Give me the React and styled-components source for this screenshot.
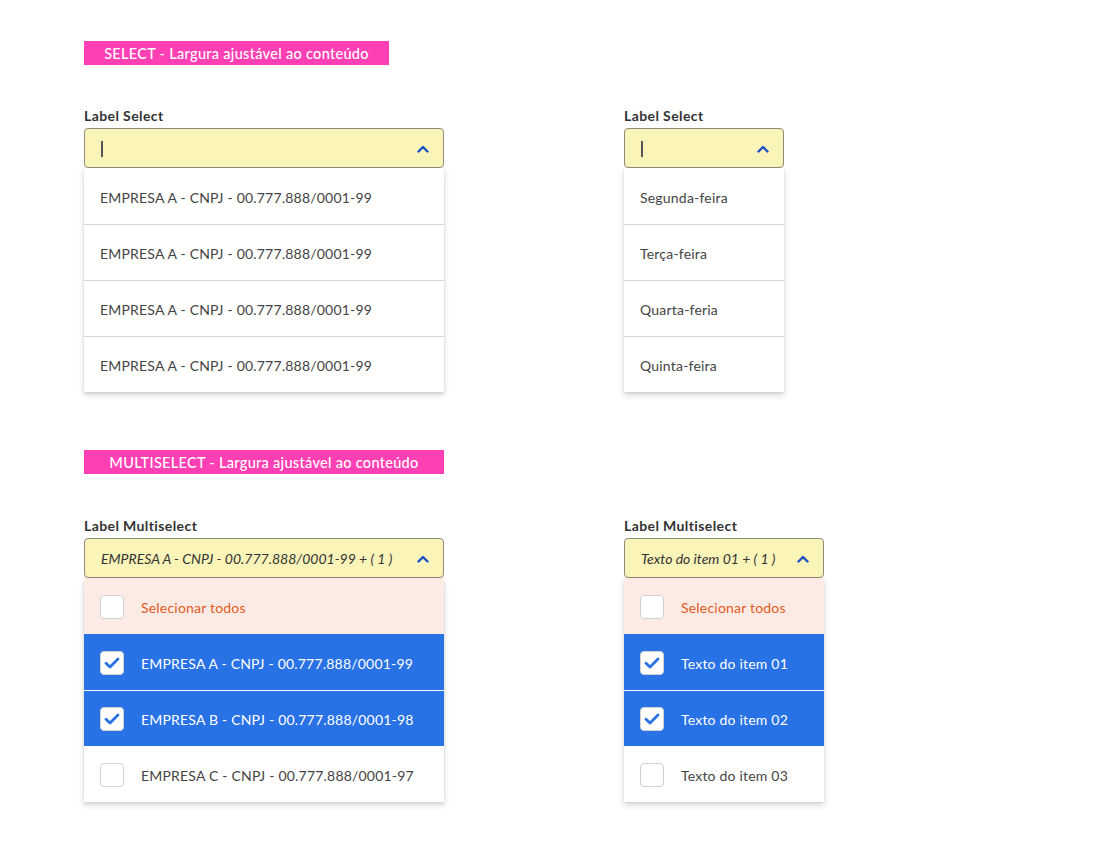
import styled, { createGlobalStyle } from 'styled-components';

const GlobalStyle = createGlobalStyle`
  body {
    margin: 0;
    background: #ffffff;
    font-family: Lato, "Open Sans", sans-serif;
    color: #333333;
  }
`;

const Page = styled.div`
  padding: 41px 0 40px 84px;
  display: flex;
  flex-direction: column;
`;

const Section = styled.section`
  display: flex;
  flex-direction: column;
  margin-bottom: ${p => p.$last ? '0' : '58px'};
`;

const Banner = styled.div`
  align-self: flex-start;
  box-sizing: border-box;
  width: ${p => p.$width}px;
  height: 24px;
  background: #ff3fb4;
  color: #ffffff;
  font-size: 14.5px;
  font-weight: 500;
  letter-spacing: 0.3px;
  display: flex;
  align-items: center;
  justify-content: center;
  margin-bottom: ${p => p.$gap}px;
`;

const Row = styled.div`
  display: flex;
  align-items: flex-start;
  gap: 180px;
`;

const Field = styled.div`
  width: ${p => p.$width}px;
  display: flex;
  flex-direction: column;
`;

const Label = styled.label`
  font-size: 14px;
  font-weight: 700;
  letter-spacing: 0.4px;
  color: #333333;
  height: 20px;
  line-height: 20px;
  margin-bottom: 2px;
`;

const Control = styled.div`
  box-sizing: border-box;
  height: 40px;
  background: #faf4b8;
  border: 1px solid #8c8a78;
  border-radius: 4px;
  display: flex;
  align-items: center;
  padding: 1px 14px 0 16px;
  gap: 12px;
`;

const Cursor = styled.span`
  width: 2px;
  height: 16px;
  background: #555555;
`;

const Value = styled.span`
  flex: 1;
  font-size: 14px;
  font-style: italic;
  color: #333333;
  white-space: nowrap;
`;

const Spacer = styled.span`
  flex: 1;
`;

const Chevron = () => (
  <svg width="12" height="8" viewBox="0 0 12 8" fill="none">
    <path d="M1.5 6.5L6 2L10.5 6.5" stroke="#1a4fc4" strokeWidth="2.4" strokeLinecap="round" strokeLinejoin="round" />
  </svg>
);

const List = styled.ul`
  list-style: none;
  margin: 0;
  padding: 0;
  background: #ffffff;
  box-shadow: 0 3px 6px rgba(0, 0, 0, 0.16), 0 1px 2px rgba(0, 0, 0, 0.08);
`;

const tones = {
  plain: { bg: '#ffffff', fg: '#444444' },
  all: { bg: '#fcebe4', fg: '#e35a1e' },
  on: { bg: '#2872e6', fg: '#ffffff' },
};

const Option = styled.li`
  height: 56px;
  box-sizing: border-box;
  display: flex;
  align-items: center;
  gap: 17px;
  padding: 2px 16px 0;
  font-size: 14px;
  letter-spacing: 0.2px;
  color: ${p => tones[p.$tone || 'plain'].fg};
  background: ${p => tones[p.$tone || 'plain'].bg};
  border-top: 1px solid ${p => p.$line || 'transparent'};
  white-space: nowrap;
`;

const Box = styled.span`
  box-sizing: border-box;
  width: 24px;
  height: 24px;
  flex: none;
  margin-top: -2px;
  background: #ffffff;
  border: 1px solid #d2d2d2;
  border-radius: 4px;
  display: flex;
  align-items: center;
  justify-content: center;
`;

const Check = ({ on }) => (
  <Box>
    {on && (
      <svg width="16" height="12" viewBox="0 0 16 12" fill="none">
        <path d="M2 6.2L6 10L14 2" stroke="#2872e6" strokeWidth="2.8" strokeLinecap="round" strokeLinejoin="round" />
      </svg>
    )}
  </Box>
);

const Select = ({ width, items }) => (
  <Field $width={width}>
    <Label>Label Select</Label>
    <Control>
      <Cursor />
      <Spacer />
      <Chevron />
    </Control>
    <List>
      {items.map((t, i) => (
        <Option key={i} $line={i > 0 ? '#d4d4d4' : undefined}>{t}</Option>
      ))}
    </List>
  </Field>
);

const MultiSelect = ({ width, value, items }) => (
  <Field $width={width}>
    <Label>Label Multiselect</Label>
    <Control>
      <Value>{value}</Value>
      <Chevron />
    </Control>
    <List>
      <Option $tone="all"><Check />Selecionar todos</Option>
      {items.map((it, i) => (
        <Option
          key={i}
          $tone={it.on ? 'on' : undefined}
          $line={it.on && i > 0 && items[i - 1].on ? '#ffffff' : undefined}
        >
          <Check on={it.on} />{it.text}
        </Option>
      ))}
    </List>
  </Field>
);

const empresa = 'EMPRESA A - CNPJ - 00.777.888/0001-99';

export default function App() {
  return (
    <Page>
      <GlobalStyle />
      <Section>
        <Banner $width={305} $gap={41}>SELECT - Largura ajustável ao conteúdo</Banner>
        <Row>
          <Select width={360} items={[empresa, empresa, empresa, empresa]} />
          <Select width={160} items={['Segunda-feira', 'Terça-feira', 'Quarta-feria', 'Quinta-feira']} />
        </Row>
      </Section>
      <Section $last>
        <Banner $width={360} $gap={42}>MULTISELECT - Largura ajustável ao conteúdo</Banner>
        <Row>
          <MultiSelect
            width={360}
            value="EMPRESA A - CNPJ - 00.777.888/0001-99 + ( 1 )"
            items={[
              { text: 'EMPRESA A - CNPJ - 00.777.888/0001-99', on: true },
              { text: 'EMPRESA B - CNPJ - 00.777.888/0001-98', on: true },
              { text: 'EMPRESA C - CNPJ - 00.777.888/0001-97' },
            ]}
          />
          <MultiSelect
            width={200}
            value="Texto do item 01 + ( 1 )"
            items={[
              { text: 'Texto do item 01', on: true },
              { text: 'Texto do item 02', on: true },
              { text: 'Texto do item 03' },
            ]}
          />
        </Row>
      </Section>
    </Page>
  );
}
